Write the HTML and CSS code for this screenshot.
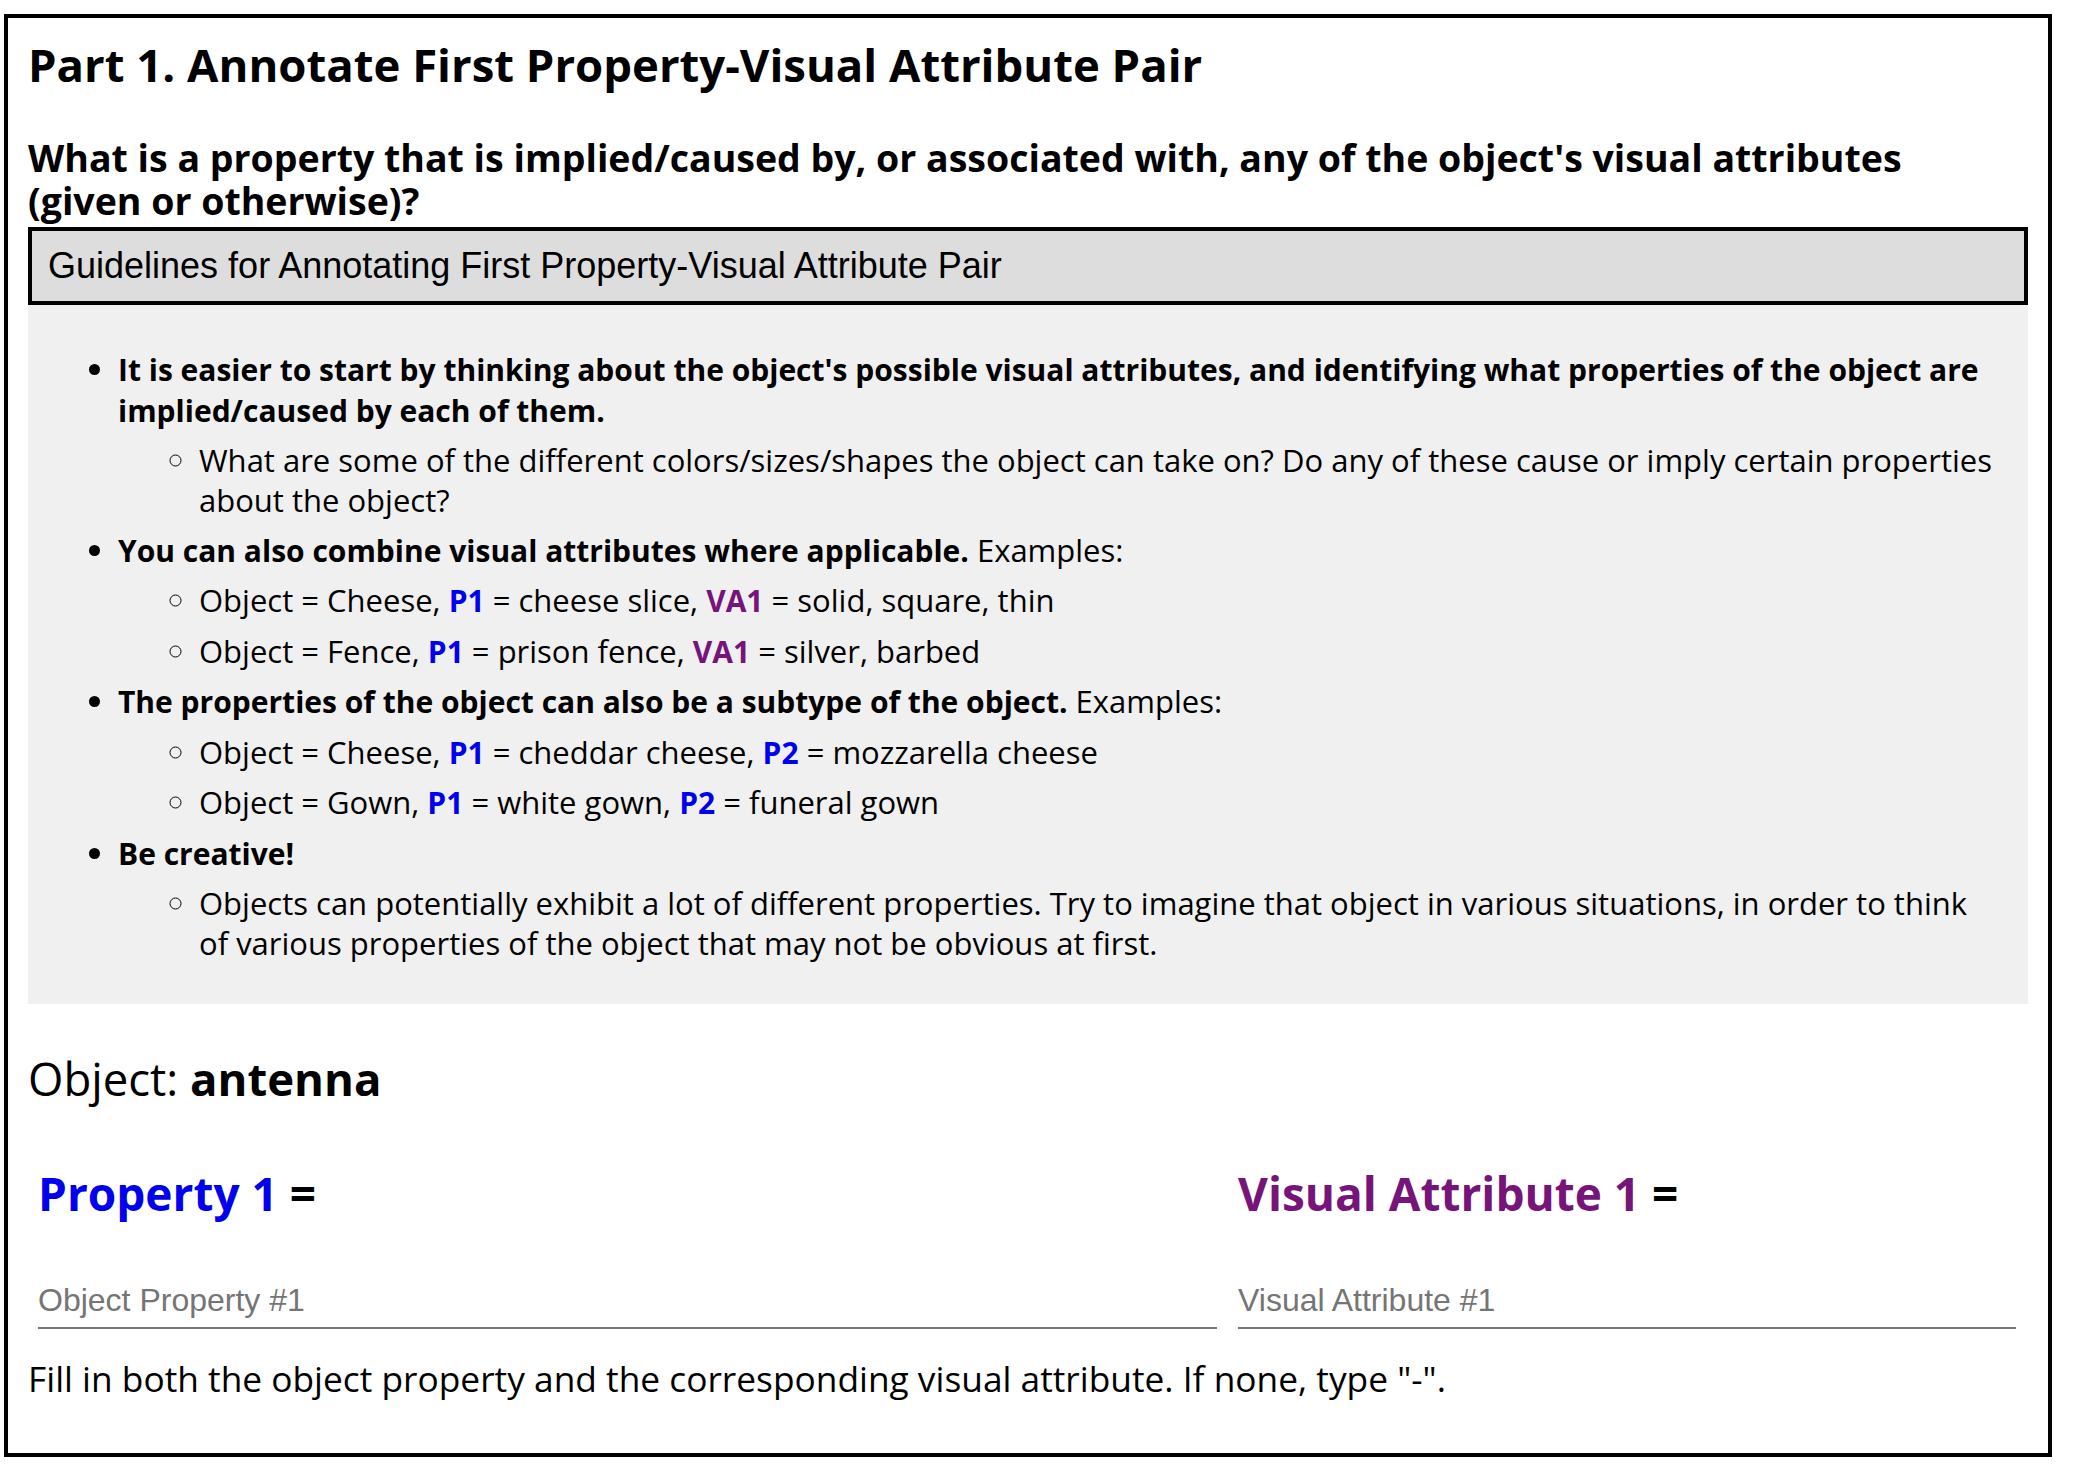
FILE: index.html
```html
<!DOCTYPE html>
<html>
    <head>
        <title>Annotate Property-Visual Attribute Pair</title>
        <meta charset="UTF-8">
        <link rel="stylesheet" href="styles.css">
    </head>
    <body>
        <div class="frame">
            <h3 class="part-title">Part 1. Annotate First Property-Visual Attribute Pair</h3>
            <h4 class="question">What is a property that is implied/caused by, or associated with, any of the object's visual attributes (given or otherwise)?</h4>
            <div class="guide-toggle">Guidelines for Annotating First Property-Visual Attribute Pair</div>
            <div class="guide-panel">
                <ul class="guide-list">
                    <li>
                        <b>It is easier to start by thinking about the object's possible visual attributes, and identifying what properties of the object are implied/caused by each of them.</b>
                        <ul>
                            <li>What are some of the different colors/sizes/shapes the object can take on? Do any of these cause or imply certain properties about the object?</li>
                        </ul>
                    </li>
                    <li>
                        <b>You can also combine visual attributes where applicable.</b> Examples:
                        <ul>
                            <li>Object = Cheese, <b class="p">P1</b> = cheese slice, <b class="va">VA1</b> = solid, square, thin</li>
                            <li>Object = Fence, <b class="p">P1</b> = prison fence, <b class="va">VA1</b> = silver, barbed</li>
                        </ul>
                    </li>
                    <li>
                        <b>The properties of the object can also be a subtype of the object.</b> Examples:
                        <ul>
                            <li>Object = Cheese, <b class="p">P1</b> = cheddar cheese, <b class="p">P2</b> = mozzarella cheese</li>
                            <li>Object = Gown, <b class="p">P1</b> = white gown, <b class="p">P2</b> = funeral gown</li>
                        </ul>
                    </li>
                    <li>
                        <b>Be creative!</b>
                        <ul>
                            <li>Objects can potentially exhibit a lot of different properties. Try to imagine that object in various situations, in order to think of various properties of the object that may not be obvious at first.</li>
                        </ul>
                    </li>
                </ul>
            </div>
            <h3 class="object-line">Object: <b>antenna</b></h3>
            <div class="pair">
                <div class="pair-col">
                    <div class="pair-label"><span class="p">Property 1</span> =</div>
                    <input type="text" class="pair-input" placeholder="Object Property #1">
                </div>
                <div class="pair-col">
                    <div class="pair-label"><span class="va">Visual Attribute 1</span> =</div>
                    <input type="text" class="pair-input" placeholder="Visual Attribute #1">
                </div>
            </div>
            <p class="hint">Fill in both the object property and the corresponding visual attribute. If none, type "-".</p>
        </div>
    </body>
</html>
```
FILE: styles.css
```css
body{
    margin: 0;
    background-color: white;
    color: black;
    font-family: "Open Sans", Lato, sans-serif;
}
.frame{
    margin: 14px 0 0 4px;
    width: 2000px;
    height: 1435px;
    border: 4px solid black;
    padding: 0 20px;
}
.part-title{
    font-size: 45.5px;
    font-weight: bold;
    line-height: 1.1;
    margin: 21px 0 0 0;
}
.question{
    font-size: 37.5px;
    font-weight: bold;
    line-height: 43px;
    margin: 47px 40px 5px 0;
}
.guide-toggle{
    background-color: #dddddd;
    border: 4px solid black;
    font-family: "Liberation Sans", Arial, sans-serif;
    font-size: 36px;
    line-height: 70px;
    padding: 0 16px;
}
.guide-panel{
    background-color: #f0f0f0;
    padding: 34px 30px 41px 0;
}
.guide-list{
    margin: 0;
    padding-left: 90px;
    font-size: 31px;
    line-height: 40px;
}
.guide-list b{
    font-size: 30px;
}
.guide-list li{
    margin-top: 9.5px;
}
.guide-list ul{
    list-style-type: circle;
    padding-left: 81px;
    margin: 0;
}
.p{
    color: #0000ee;
}
.va{
    color: #771479;
}
.object-line{
    font-size: 45.5px;
    font-weight: normal;
    line-height: 1.1;
    margin: 49px 0 0 0;
}
.pair{
    display: grid;
    grid-template-columns: 1179px 778px;
    column-gap: 21px;
    padding-left: 10px;
    margin-top: 65px;
}
.pair-label{
    font-size: 46px;
    font-weight: bold;
    line-height: 1.1;
}
.pair-input{
    display: block;
    box-sizing: content-box;
    width: 100%;
    height: 40px;
    margin: 61px 0 0 0;
    border: none;
    border-bottom: 2px solid #777777;
    background: transparent;
    padding: 0 0 7px 0;
    font-family: "Liberation Sans", Arial, sans-serif;
    font-size: 32px;
    line-height: 40px;
    outline: none;
}
.pair-input::placeholder{
    color: #757575;
}
.hint{
    font-size: 35.3px;
    line-height: 44px;
    margin: 27px 0 0 0;
}
```
